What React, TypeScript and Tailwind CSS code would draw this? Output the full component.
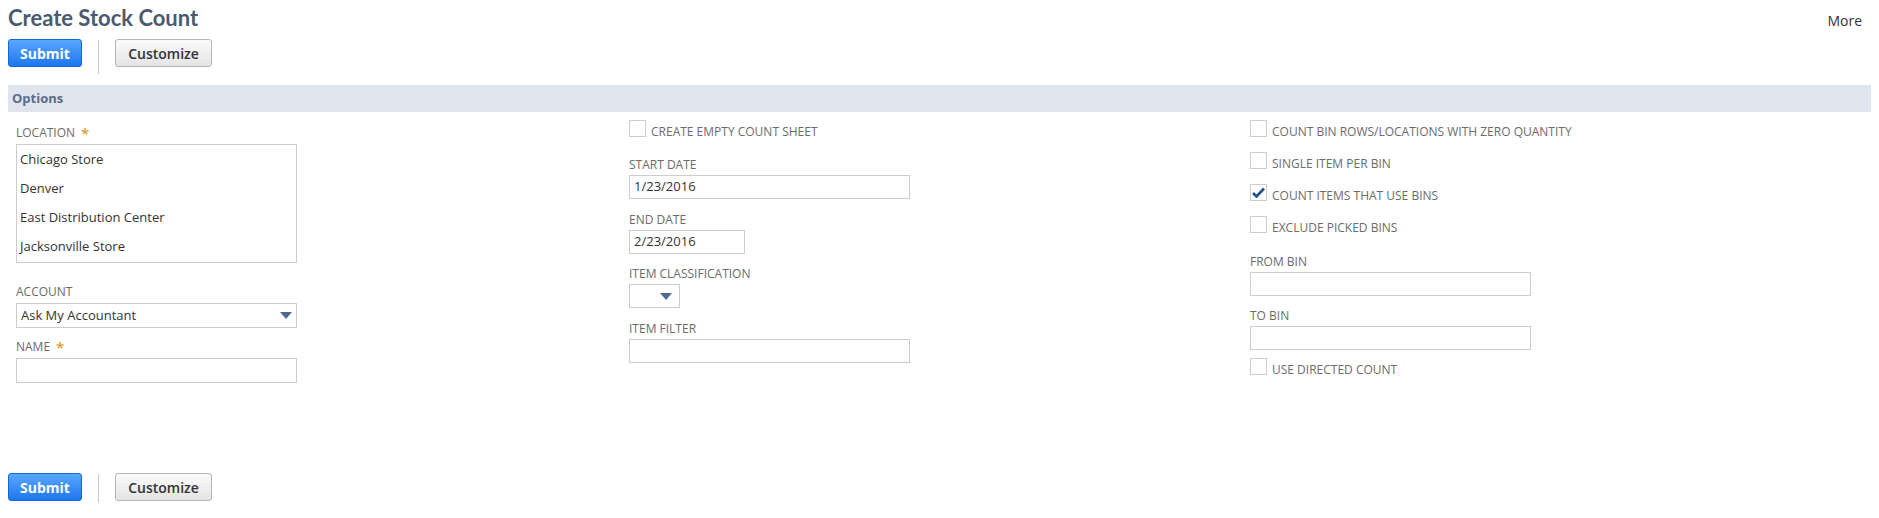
import React from 'react'

const font = { fontFamily: '"Open Sans", "Liberation Sans", sans-serif' }

function Buttons({ bar }: { bar: string }) {
  return (
    <div className="flex items-start pl-2">
      <button className="h-[28px] w-[74px] rounded-[3px] border border-[#1467d7] bg-gradient-to-b from-[#5aa7ff] to-[#1c76ee] text-[14px] font-bold text-white">
        Submit
      </button>
      <div className={`mx-[16px] mt-[1px] w-px bg-[#c8c8c8] ${bar}`} />
      <button className="h-[28px] w-[97px] rounded-[3px] border border-[#b5b5b5] bg-gradient-to-b from-[#fbfbfb] to-[#e4e4e4] text-[14px] font-semibold text-[#333]">
        Customize
      </button>
    </div>
  )
}

function Label({ text, req }: { text: string; req?: boolean }) {
  return (
    <div className="flex h-[20px] items-center text-[12px] uppercase text-[#6b6b6b]">
      {text}
      {req && <span className="ml-[6px] text-[15px] leading-none font-semibold text-[#e39b2e]">*</span>}
    </div>
  )
}

function Input({ value, w, h = 'h-[24px]' }: { value?: string; w: string; h?: string }) {
  return (
    <div className={`${w} ${h} flex items-center border border-[#cccccc] bg-white px-[4px] text-[13px] text-[#333]`}>
      {value}
    </div>
  )
}

function Arrow() {
  return (
    <svg width="12" height="7" viewBox="0 0 12 7">
      <path d="M0 0 H12 L6 7 Z" fill="#4f6b91" />
    </svg>
  )
}

function Check({ label, checked }: { label: string; checked?: boolean }) {
  return (
    <div className="flex h-[32px] items-center">
      <div className="mb-[8px] flex h-[17px] w-[17px] items-center justify-center border border-[#cccccc] bg-white">
        {checked && (
          <svg width="13" height="11" viewBox="0 0 13 11">
            <path d="M1 6 L4.5 9.5 L12 1.5" stroke="#24508f" strokeWidth="2.6" fill="none" />
          </svg>
        )}
      </div>
      <span className="ml-[5px] text-[12px] uppercase text-[#6b6b6b]">{label}</span>
    </div>
  )
}

export default function App() {
  return (
    <div className="min-h-[518px] w-[1879px] bg-white" style={font}>
      <div className="flex items-start justify-between pl-2 pr-[17px]">
        <h1 className="pt-[3px] font-['Lato',sans-serif] text-[22px] leading-[30px] font-bold text-[#4b5a70]">
          Create Stock Count
        </h1>
        <div className="pt-[10px] text-[14px] text-[#333]">More</div>
      </div>
      <div className="mt-[6px]">
        <Buttons bar="h-[34px]" />
      </div>
      <div className="mx-2 mt-[11px] flex h-[27px] items-center bg-[#dfe4ee] px-[4px] text-[13px] font-bold text-[#5a6d8b]">
        Options
      </div>
      <div className="grid grid-cols-[613px_621px_1fr] pl-4">
        <div className="pt-[11px]">
          <Label text="Location" req />
          <div className="mt-[1px] w-[281px] border border-[#cccccc] bg-white pb-[1px] text-[13px] text-[#333]">
            {['Chicago Store', 'Denver', 'East Distribution Center', 'Jacksonville Store'].map((l) => (
              <div key={l} className="flex h-[29px] items-center px-[3px]">
                {l}
              </div>
            ))}
          </div>
          <div className="mt-[19px]">
            <Label text="Account" />
          </div>
          <div className="mt-[1px] flex h-[25px] w-[281px] items-center justify-between border border-[#cccccc] bg-white px-[4px] text-[13px] text-[#333]">
            Ask My Accountant
            <Arrow />
          </div>
          <div className="mt-[9px]">
            <Label text="Name" req />
          </div>
          <div className="mt-[1px]">
            <Input w="w-[281px]" h="h-[25px]" />
          </div>
        </div>
        <div className="pt-[4px]">
          <Check label="Create Empty Count Sheet" />
          <div className="mt-[7px]">
            <Label text="Start Date" />
          </div>
          <Input w="w-[281px]" value="1/23/2016" />
          <div className="mt-[11px]">
            <Label text="End Date" />
          </div>
          <Input w="w-[116px]" value="2/23/2016" />
          <div className="mt-[10px]">
            <Label text="Item Classification" />
          </div>
          <div className="flex h-[24px] w-[51px] items-center justify-end border border-[#cccccc] bg-white pr-[7px]">
            <Arrow />
          </div>
          <div className="mt-[11px]">
            <Label text="Item Filter" />
          </div>
          <Input w="w-[281px]" />
        </div>
        <div className="pt-[4px]">
          <Check label="Count Bin Rows/Locations with Zero Quantity" />
          <Check label="Single Item per Bin" />
          <Check label="Count Items that use Bins" checked />
          <Check label="Exclude Picked Bins" />
          <div className="mt-[8px]">
            <Label text="From Bin" />
          </div>
          <Input w="w-[281px]" />
          <div className="mt-[10px]">
            <Label text="To Bin" />
          </div>
          <Input w="w-[281px]" />
          <div className="mt-[4px]">
            <Check label="Use Directed Count" />
          </div>
        </div>
      </div>
      <div className="mt-[87px]">
        <Buttons bar="h-[29px]" />
      </div>
    </div>
  )
}
